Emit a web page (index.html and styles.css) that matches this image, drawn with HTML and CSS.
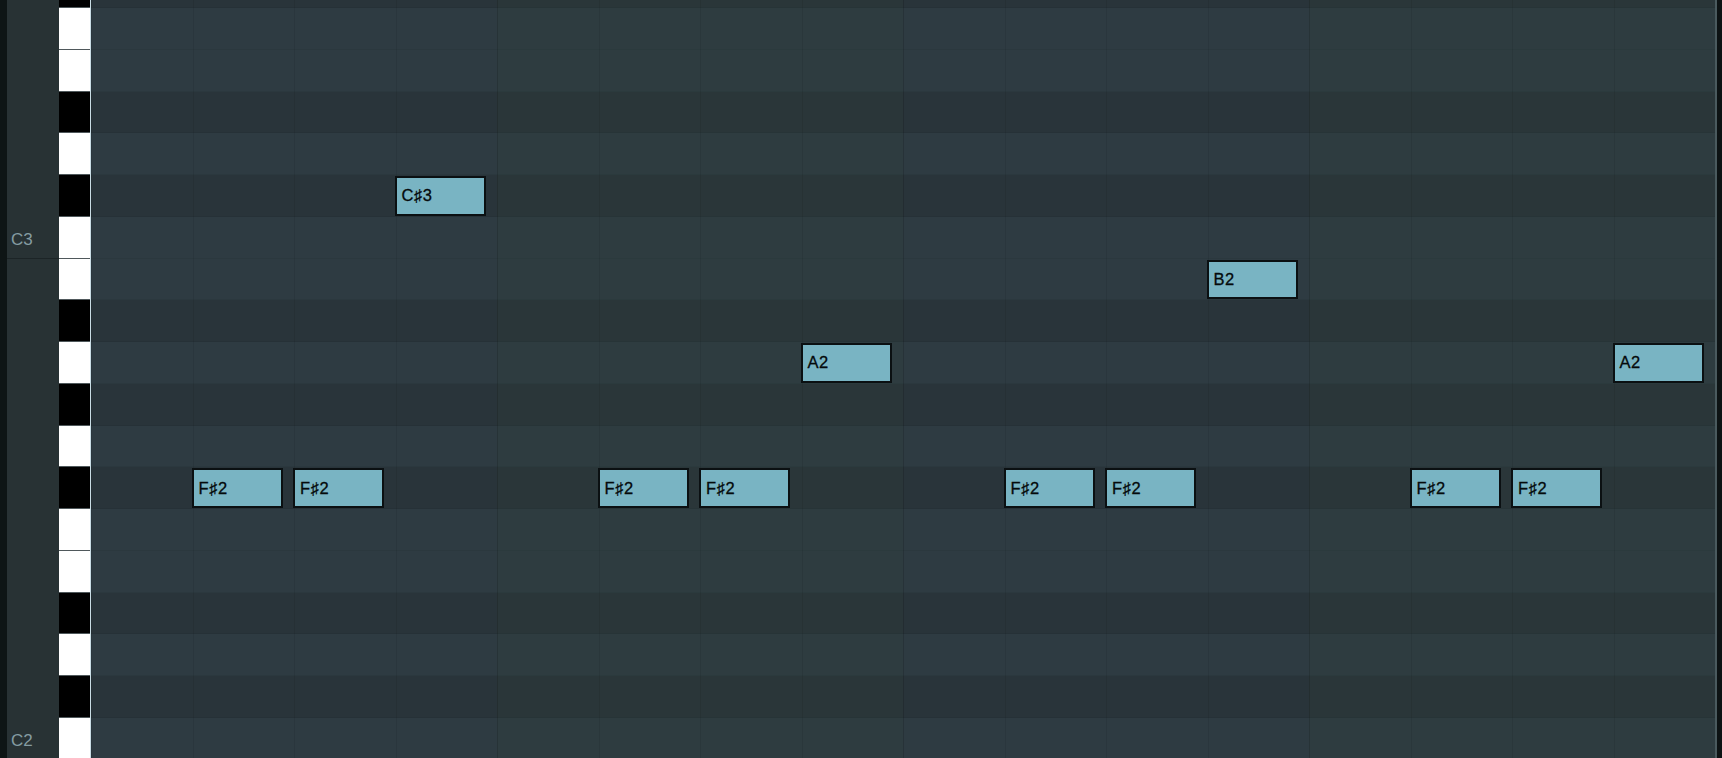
FILE: index.html
```html
<!DOCTYPE html>
<html>
<head>
<meta charset="utf-8">
<link rel="stylesheet" href="styles.css">
</head>
<body>
<div class="roll">
  <div class="strip"></div>
  <div class="labels">
    <div class="lcell"></div><div class="lcell"></div><div class="lcell"></div><div class="lcell"></div><div class="lcell"></div><div class="lcell"></div>
    <div class="lcell octave">C3</div>
    <div class="lcell"></div><div class="lcell"></div><div class="lcell"></div><div class="lcell"></div><div class="lcell"></div><div class="lcell"></div><div class="lcell"></div><div class="lcell"></div><div class="lcell"></div><div class="lcell"></div><div class="lcell"></div>
    <div class="lcell octave">C2</div>
  </div>
  <div class="keys">
    <div class="key black"></div>
    <div class="key white"></div>
    <div class="key white"></div>
    <div class="key black"></div>
    <div class="key white"></div>
    <div class="key black"></div>
    <div class="key white"></div>
    <div class="key white"></div>
    <div class="key black"></div>
    <div class="key white"></div>
    <div class="key black"></div>
    <div class="key white"></div>
    <div class="key black"></div>
    <div class="key white"></div>
    <div class="key white"></div>
    <div class="key black"></div>
    <div class="key white"></div>
    <div class="key black"></div>
    <div class="key white"></div>
  </div>
  <div class="edge"></div>
  <div class="grid">
    <div class="row dark" style="grid-row:1"></div>
    <div class="row light" style="grid-row:2"></div>
    <div class="row light" style="grid-row:3"></div>
    <div class="row dark" style="grid-row:4"></div>
    <div class="row light" style="grid-row:5"></div>
    <div class="row dark" style="grid-row:6"></div>
    <div class="row light" style="grid-row:7"></div>
    <div class="row light" style="grid-row:8"></div>
    <div class="row dark" style="grid-row:9"></div>
    <div class="row light" style="grid-row:10"></div>
    <div class="row dark" style="grid-row:11"></div>
    <div class="row light" style="grid-row:12"></div>
    <div class="row dark" style="grid-row:13"></div>
    <div class="row light" style="grid-row:14"></div>
    <div class="row light" style="grid-row:15"></div>
    <div class="row dark" style="grid-row:16"></div>
    <div class="row light" style="grid-row:17"></div>
    <div class="row dark" style="grid-row:18"></div>
    <div class="row light" style="grid-row:19"></div>

    <div class="bar" style="grid-column:5 / 9"></div>
    <div class="bar" style="grid-column:13 / 17"></div>

    <div class="col" style="grid-column:1"></div>
    <div class="col" style="grid-column:2"></div>
    <div class="col" style="grid-column:3"></div>
    <div class="col" style="grid-column:4"></div>
    <div class="col major" style="grid-column:5"></div>
    <div class="col" style="grid-column:6"></div>
    <div class="col" style="grid-column:7"></div>
    <div class="col" style="grid-column:8"></div>
    <div class="col major" style="grid-column:9"></div>
    <div class="col" style="grid-column:10"></div>
    <div class="col" style="grid-column:11"></div>
    <div class="col" style="grid-column:12"></div>
    <div class="col major" style="grid-column:13"></div>
    <div class="col" style="grid-column:14"></div>
    <div class="col" style="grid-column:15"></div>
    <div class="col" style="grid-column:16"></div>

    <div class="note" style="grid-row:6;grid-column:4">C♯3</div>
    <div class="note" style="grid-row:8;grid-column:12">B2</div>
    <div class="note" style="grid-row:10;grid-column:8">A2</div>
    <div class="note" style="grid-row:10;grid-column:16">A2</div>
    <div class="note" style="grid-row:13;grid-column:2">F♯2</div>
    <div class="note" style="grid-row:13;grid-column:3">F♯2</div>
    <div class="note" style="grid-row:13;grid-column:6">F♯2</div>
    <div class="note" style="grid-row:13;grid-column:7">F♯2</div>
    <div class="note" style="grid-row:13;grid-column:10">F♯2</div>
    <div class="note" style="grid-row:13;grid-column:11">F♯2</div>
    <div class="note" style="grid-row:13;grid-column:14">F♯2</div>
    <div class="note" style="grid-row:13;grid-column:15">F♯2</div>
  </div>
  <div class="rim"></div>
  <div class="outer"></div>
</div>
</body>
</html>
```
FILE: styles.css
```css
* { box-sizing: border-box; }
html, body {
  margin: 0;
  padding: 0;
  width: 1722px;
  height: 758px;
  overflow: hidden;
  background: #0e1515;
  font-family: "Liberation Sans", Arial, sans-serif;
}
.roll {
  display: flex;
  height: 793.25px;
  margin-top: -33.75px;
}
.strip {
  width: 7px;
  flex: none;
  background: #0e1515;
}
.labels {
  width: 52px;
  flex: none;
  background: #283234;
  display: flex;
  flex-direction: column;
}
.lcell {
  height: 41.75px;
  flex: none;
}
.octave {
  display: flex;
  align-items: flex-end;
  padding: 0 0 10px 4px;
  font-size: 17px;
  line-height: 17px;
  color: #849ca2;
  border-bottom: 1px solid #1c2426;
}
.keys {
  width: 31px;
  flex: none;
  display: flex;
  flex-direction: column;
}
.key {
  height: 41.75px;
  flex: none;
  border-bottom: 1px solid #4f585b;
}
.key.white { background: #ffffff; }
.key.black { background: #000000; }
.edge {
  width: 1px;
  flex: none;
  background: #c9dde5;
}
.grid {
  width: 1624px;
  flex: none;
  display: grid;
  grid-template-columns: repeat(16, 1fr);
  grid-template-rows: repeat(19, 41.75px);
}
.row {
  grid-column: 1 / -1;
  border-bottom: 1px solid rgba(0, 0, 0, 0.05);
}
.row.light { background: #2e3b42; }
.row.dark { background: #29343a; }
.bar {
  grid-row: 1 / -1;
  background: rgba(52, 72, 58, 0.14);
}
.col {
  grid-row: 1 / -1;
  border-left: 1px solid rgba(0, 0, 0, 0.07);
}
.col.major { border-left-color: rgba(0, 0, 0, 0.14); }
.note {
  z-index: 1;
  width: 90%;
  height: 39.5px;
  margin: 1px 0 0 -1px;
  align-self: start;
  background: #79b4c3;
  border: 2px solid #0b1012;
  padding-left: 5px;
  display: flex;
  align-items: center;
  font-size: 16.5px;
  letter-spacing: 0.6px;
  color: #050a0b;
  -webkit-text-stroke: 0.3px #050a0b;
  white-space: nowrap;
}
.rim {
  width: 2px;
  flex: none;
  background: #4a5a5e;
}
.outer {
  width: 5px;
  flex: none;
  background: #0d1314;
}
```
